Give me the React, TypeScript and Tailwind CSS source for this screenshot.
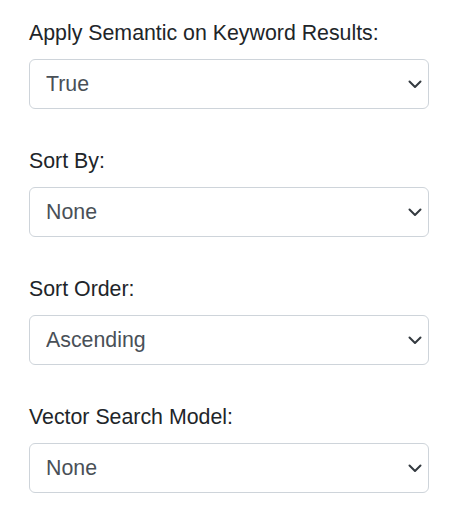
import { ChangeEvent, useState } from 'react';

type Field = {
  id: string;
  label: string;
  options: string[];
  initial: string;
};

const fields: Field[] = [
  { id: 'semantic', label: 'Apply Semantic on Keyword Results:', options: ['True', 'False'], initial: 'True' },
  { id: 'sortBy', label: 'Sort By:', options: ['None', 'Relevance', 'Date', 'Title'], initial: 'None' },
  { id: 'sortOrder', label: 'Sort Order:', options: ['Ascending', 'Descending'], initial: 'Ascending' },
  { id: 'vectorModel', label: 'Vector Search Model:', options: ['None', 'Default'], initial: 'None' },
];

const Chevron = () => (
  <svg
    className="pointer-events-none absolute right-[6px] top-1/2 h-4 w-4 -translate-y-1/2"
    viewBox="0 0 16 16"
    fill="none"
    stroke="#343a40"
    strokeWidth="2"
    strokeLinecap="round"
    strokeLinejoin="round"
  >
    <path d="m2.5 5.5 5.5 5.5 5.5-5.5" />
  </svg>
);

export default function App() {
  const [values, setValues] = useState<Record<string, string>>(
    Object.fromEntries(fields.map((f) => [f.id, f.initial]))
  );

  const handleChange = (id: string) => (e: ChangeEvent<HTMLSelectElement>) => {
    setValues((prev) => ({ ...prev, [id]: e.target.value }));
  };

  return (
    <div className="min-h-[515px] w-[460px] bg-white px-[29px] pt-[17px] font-['Liberation_Sans',Arial,sans-serif]">
      <div className="flex w-[400px] flex-col gap-[36px]">
        {fields.map((field) => (
          <div key={field.id} className="flex flex-col">
            <label htmlFor={field.id} className="mb-[10px] block text-[21.33px] leading-[32px] text-[#212529]">
              {field.label}
            </label>
            <div className="relative">
              <select
                id={field.id}
                value={values[field.id]}
                onChange={handleChange(field.id)}
                className="block h-[50px] w-full appearance-none rounded-[6px] border border-[#ced4da] bg-white pl-[16px] pr-[40px] text-[21.33px] leading-[32px] text-[#495057] outline-none"
              >
                {field.options.map((opt) => (
                  <option key={opt} value={opt}>
                    {opt}
                  </option>
                ))}
              </select>
              <Chevron />
            </div>
          </div>
        ))}
      </div>
    </div>
  );
}
